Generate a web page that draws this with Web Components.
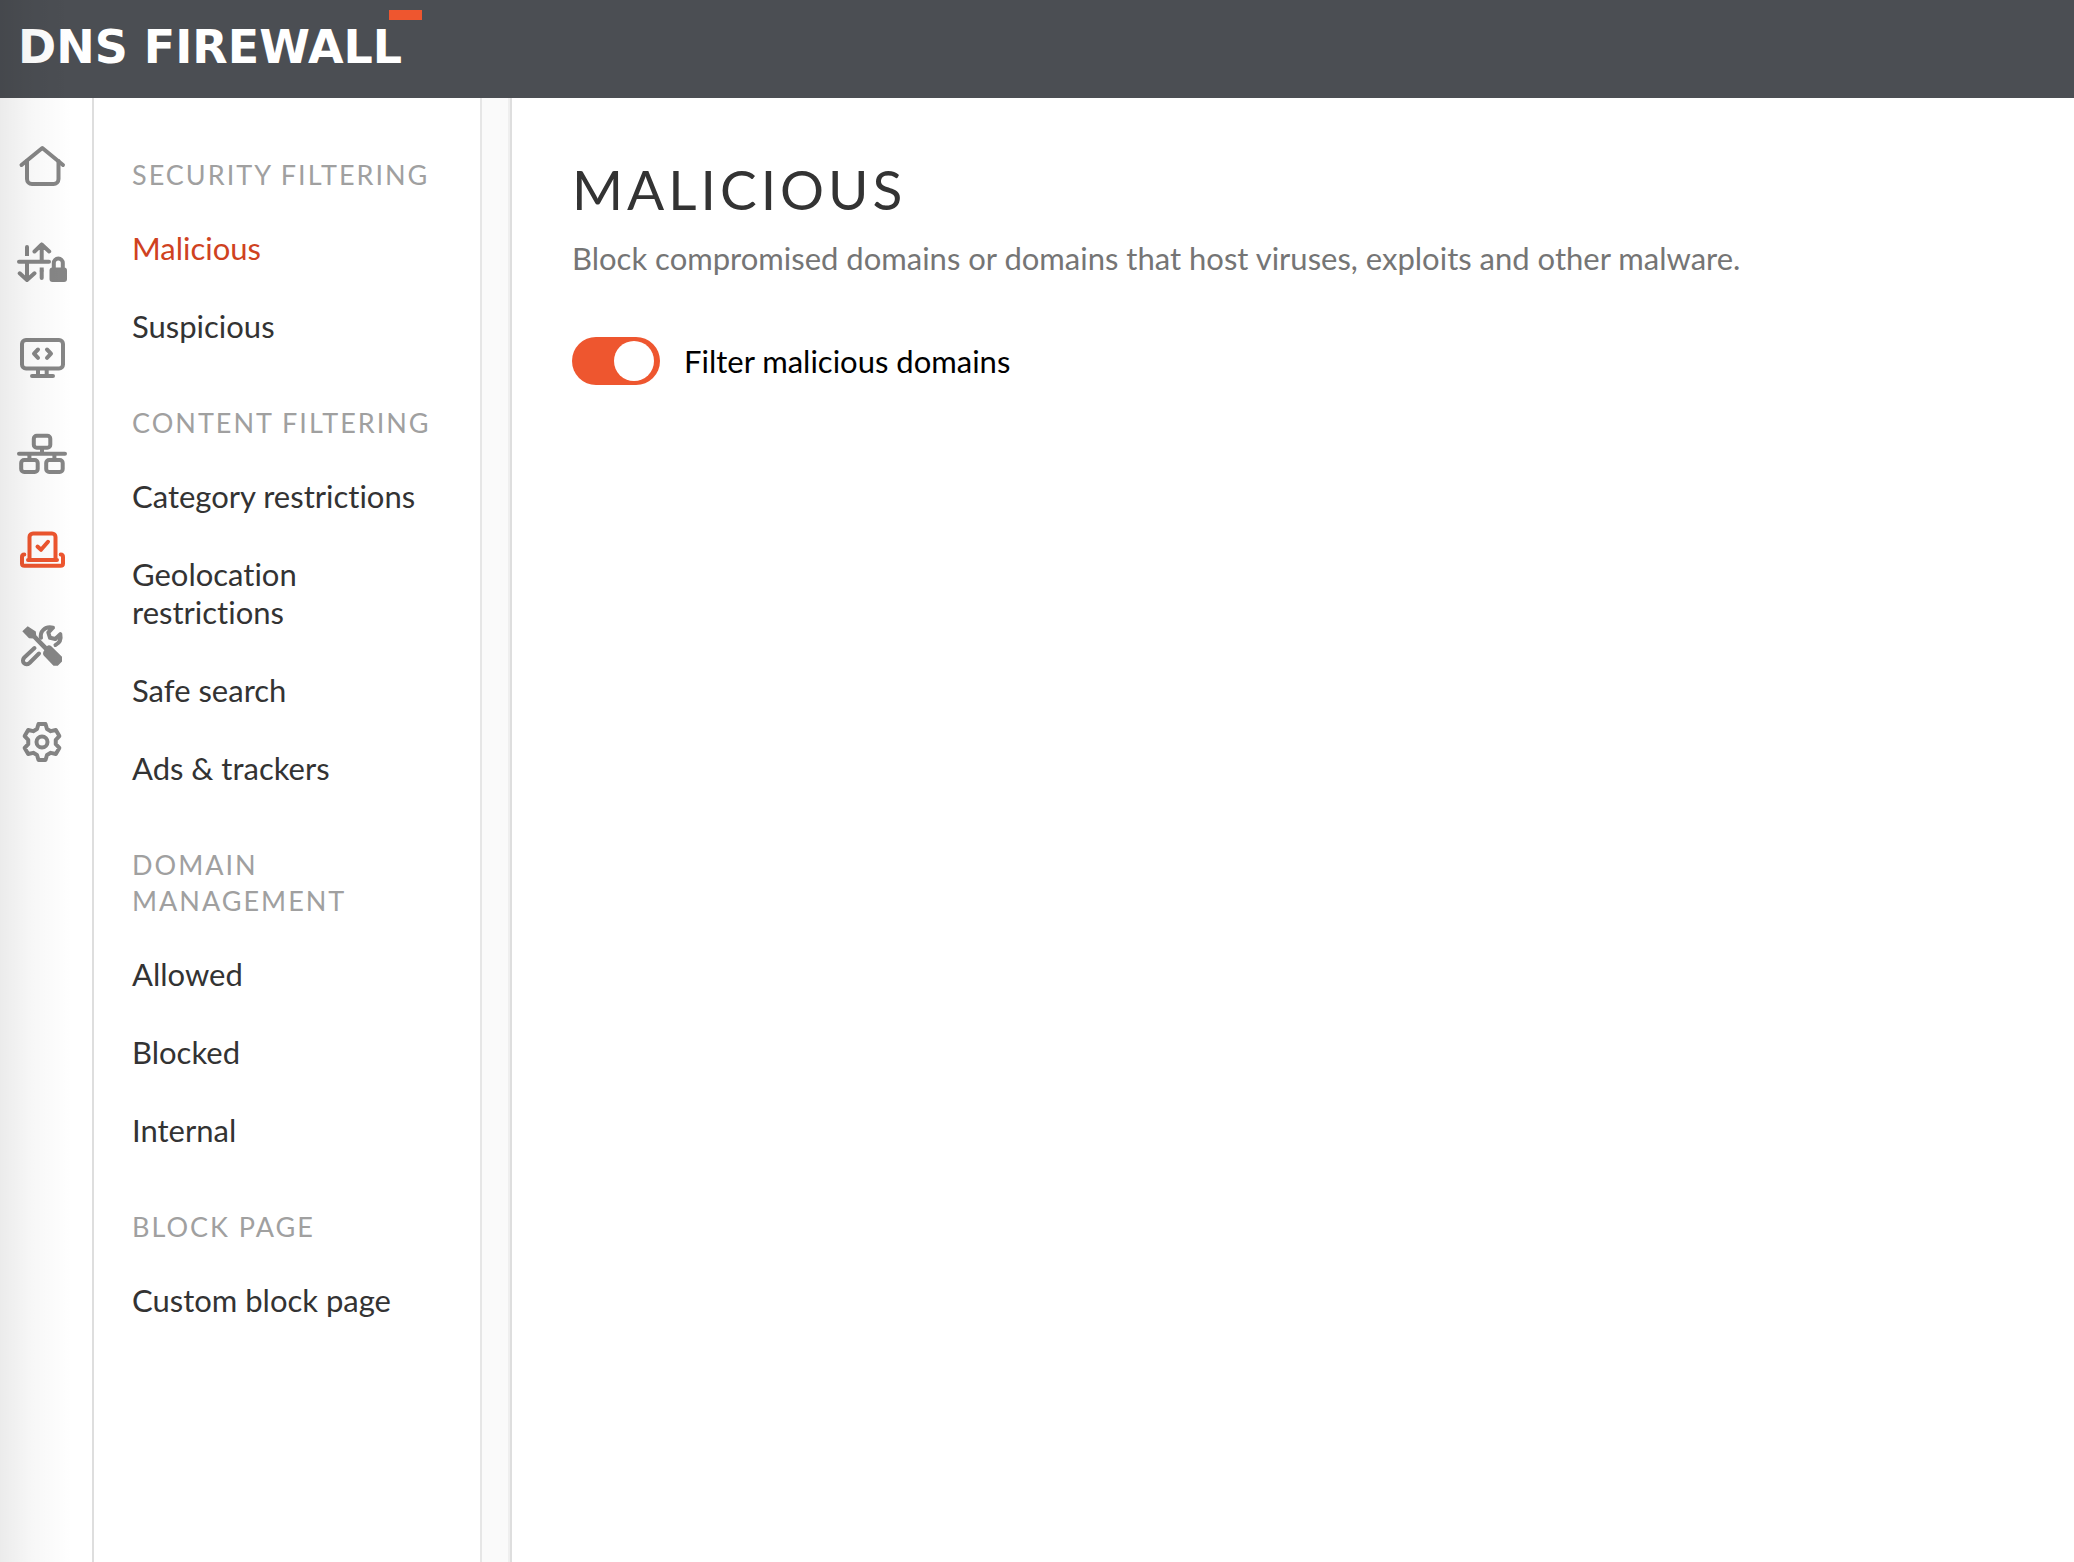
<!DOCTYPE html>
<html lang="en">
<head>
<meta charset="utf-8">
<meta name="viewport" content="width=device-width, initial-scale=1">
<title>DNS Firewall</title>
<style>
    body {
        margin: 0;
        background-color: #fff;
        color: #333;
        font-family: Lato, "Open Sans", sans-serif;
        font-size: 31px;
        font-variant-ligatures: none;
        line-height: 38px;
        --accent: #ee562f;
        --accent-text: #cf421f;
        --bar: #4b4e53;
        --icon: #868686;
        --line: #dedede;
    }
</style>
</head>
<body>
<firewall-app>
    <app-header slot="header">DNS FIREWALL</app-header>
    <icon-rail slot="rail"></icon-rail>
    <side-menu slot="menu">
        <menu-group heading="Security filtering">
            <menu-item active>Malicious</menu-item>
            <menu-item>Suspicious</menu-item>
        </menu-group>
        <menu-group heading="Content filtering">
            <menu-item>Category restrictions</menu-item>
            <menu-item>Geolocation restrictions</menu-item>
            <menu-item>Safe search</menu-item>
            <menu-item>Ads &amp; trackers</menu-item>
        </menu-group>
        <menu-group heading="Domain management">
            <menu-item>Allowed</menu-item>
            <menu-item>Blocked</menu-item>
            <menu-item>Internal</menu-item>
        </menu-group>
        <menu-group heading="Block page">
            <menu-item>Custom block page</menu-item>
        </menu-group>
    </side-menu>
    <filter-page>
        <span slot="title">Malicious</span>
        <span slot="description">Block compromised domains or domains that host viruses, exploits and other malware.</span>
        <toggle-switch checked label="Filter malicious domains"></toggle-switch>
    </filter-page>
</firewall-app>

<script>
class FirewallApp extends HTMLElement {
    constructor() {
        super();
        this.attachShadow({ mode: 'open' });
        this.shadowRoot.innerHTML = `
            <style>
                :host {
                    display: flex;
                    flex-direction: column;
                    min-height: 100vh;
                    position: relative;
                }
                .body {
                    display: flex;
                    flex: 1;
                }
                .gutter {
                    flex: none;
                    width: 28px;
                    background-color: #fafafa;
                    border-right: 2px solid var(--line);
                    box-shadow: inset -2px 0 #efefef;
                }
                main {
                    flex: 1;
                    min-width: 0;
                }
                /* soft shade along the window's left edge */
                .shade {
                    position: absolute;
                    top: 0;
                    bottom: 0;
                    left: 0;
                    width: 72px;
                    background: linear-gradient(to right, rgba(0, 0, 0, .08), rgba(0, 0, 0, .03) 45%, rgba(0, 0, 0, 0));
                    pointer-events: none;
                }
            </style>
            <slot name="header"></slot>
            <div class="body">
                <slot name="rail"></slot>
                <slot name="menu"></slot>
                <div class="gutter"></div>
                <main><slot></slot></main>
            </div>
            <div class="shade"></div>
        `;
    }
}

class AppHeader extends HTMLElement {
    constructor() {
        super();
        this.attachShadow({ mode: 'open' });
        this.shadowRoot.innerHTML = `
            <style>
                :host {
                    display: flex;
                    align-items: center;
                    box-sizing: border-box;
                    height: 98px;
                    padding: 0 18px 4px;
                    background-color: var(--bar);
                }
                a {
                    position: relative;
                    color: #fff;
                    font-family: "DejaVu Sans", Inter, sans-serif;
                    font-size: 46px;
                    font-weight: 700;
                    line-height: 52px;
                    text-decoration: none;
                }
                a::after {
                    content: "";
                    position: absolute;
                    top: -11px;
                    right: -20px;
                    width: 33px;
                    height: 10px;
                    background-color: var(--accent);
                }
            </style>
            <a href="#"><slot></slot></a>
        `;
    }
}

const ICONS = [
    ['Home', `
        <path d="M6.500 26 27.300 9 48 26"/>
        <path d="M12 22v18a5 5 0 0 0 5 5h21.500a5 5 0 0 0 5-5V22"/>`],
    ['Traffic', `
        <path d="M26.700 26V9.500M19.500 16.500l7.200-7 7.500 7M4 26.700h30M12 28v16.500M4.700 38.300 12 45l7.500-6.700M12 12v5M26.700 36v7"/>
        <path d="M12 16v5M26.700 32.500v4" stroke-linecap="butt"/>
        <rect x="34.500" y="32.500" width="17.500" height="14.500" rx="3" fill="currentColor" stroke="none"/>
        <path d="M38.800 33v-5a4.500 4.500 0 0 1 9 0v5"/>`],
    ['Endpoints', `
        <rect x="7" y="9" width="41" height="28.500" rx="4"/>
        <path d="M17 45h21M23 38v6M31.700 38v6M23 18.500l-4 4.200 4 4.200M32 18.500l4 4.200-4 4.200"/>`],
    ['Network', `
        <rect x="18.800" y="8.800" width="16.500" height="12" rx="3"/>
        <rect x="6.200" y="33" width="16.500" height="12" rx="3"/>
        <rect x="31.200" y="33" width="16.500" height="12" rx="3"/>
        <path d="M4 26.700h46M27 21.500v5M14.400 27v5M39.400 27v5"/>`],
    ['Filtering', `
        <path d="M14.500 36V14a3.500 3.500 0 0 1 3.500-3.500h19a3.500 3.500 0 0 1 3.500 3.500v22M13 37h29"/>
        <path d="M9.300 31.500C7.500 31.500 7 33 7 34v6.500C7 42 8 42.800 9.500 42.800h36c1.500 0 2.500-.8 2.500-2.300V34c0-1-.5-2.500-2.300-2.500M22.500 23.500l3.500 3.300 7-8"/>`],
    ['Tools', `
        <path d="M7.300 12.300 12.700 7.300 20.800 12.500 21.200 16.200 32 27.200C33 26 35 26 36.300 27.300L47 37.700V42.500L42.800 46.700H38.500L28.700 36.500C27.500 35 28 32.800 29.300 31.200L18 19.500 14 19.300Z" fill="currentColor" stroke="none"/>
        <path d="M26 18.800C24.800 13 29.500 6.700 38 8.700L33.300 13.500 35 18.800 40.300 20 45.300 15.200C46.300 20 44.500 24 40.500 26M19.500 29 9.300 38.500C5.500 42.500 10.500 47.800 14.500 44L24 34.500"/>`],
    ['Settings', `
        <circle cx="27" cy="27" r="5.500"/>
        <path transform="translate(27 27)" d="M-3.500-18H3.500L5-13 8.760-10.830 13.840-12.030 17.340-5.970 13.760-2.170V2.170L17.340 5.970 13.840 12.030 8.760 10.830 5 13 3.500 18H-3.500L-5 13-8.760 10.830-13.840 12.030-17.340 5.970-13.760 2.170V-2.170L-17.340-5.970-13.840-12.030-8.760-10.830-5-13Z"/>`]
];

class IconRail extends HTMLElement {
    constructor() {
        super();
        this.attachShadow({ mode: 'open' });
        const links = ICONS.map(([name, paths]) => `
            <a href="#" aria-label="${name}"${name === 'Filtering' ? ' class="active"' : ''}>
                <svg viewBox="0 0 54 54" width="54" height="54" aria-hidden="true">${paths}</svg>
            </a>`).join('');
        this.shadowRoot.innerHTML = `
            <style>
                :host {
                    display: block;
                    flex: none;
                    width: 92px;
                    border-right: 2px solid var(--line);
                }
                nav {
                    display: flex;
                    flex-direction: column;
                    padding: 20px 8px 20px 0;
                }
                a {
                    display: flex;
                    align-items: center;
                    justify-content: center;
                    height: 96px;
                    color: var(--icon);
                }
                a.active {
                    color: var(--accent);
                }
                svg {
                    fill: none;
                    stroke: currentColor;
                    stroke-width: 4;
                    stroke-linecap: round;
                    stroke-linejoin: round;
                }
            </style>
            <nav aria-label="Main">${links}</nav>
        `;
    }
}

class SideMenu extends HTMLElement {
    constructor() {
        super();
        this.attachShadow({ mode: 'open' });
        this.shadowRoot.innerHTML = `
            <style>
                :host {
                    display: block;
                    flex: none;
                    box-sizing: border-box;
                    width: 388px;
                    padding: 59px 38px;
                    border-right: 2px solid #e6e6e6;
                }
                nav {
                    display: flex;
                    flex-direction: column;
                    gap: 40px;
                }
            </style>
            <nav aria-label="Filtering"><slot></slot></nav>
        `;
    }
}

class MenuGroup extends HTMLElement {
    constructor() {
        super();
        this.attachShadow({ mode: 'open' });
        this.shadowRoot.innerHTML = `
            <style>
                :host {
                    display: block;
                }
                h2 {
                    margin: 0 0 16px;
                    color: #a0a0a0;
                    font-size: 27px;
                    font-weight: 400;
                    line-height: 36px;
                    letter-spacing: 2px;
                    text-transform: uppercase;
                }
            </style>
            <h2></h2>
            <slot></slot>
        `;
    }

    connectedCallback() {
        this.shadowRoot.querySelector('h2').textContent = this.getAttribute('heading');
    }
}

class MenuItem extends HTMLElement {
    constructor() {
        super();
        this.attachShadow({ mode: 'open' });
        this.shadowRoot.innerHTML = `
            <style>
                :host {
                    display: block;
                }
                a {
                    display: block;
                    padding: 20px 0;
                    color: inherit;
                    text-decoration: none;
                }
                :host([active]) a {
                    color: var(--accent-text);
                }
            </style>
            <a href="#"><slot></slot></a>
        `;
    }
}

class FilterPage extends HTMLElement {
    constructor() {
        super();
        this.attachShadow({ mode: 'open' });
        this.shadowRoot.innerHTML = `
            <style>
                :host {
                    display: block;
                    padding: 59px 60px;
                }
                h1 {
                    margin: 0;
                    font-size: 55px;
                    font-weight: 400;
                    line-height: 64px;
                    letter-spacing: 4px;
                    text-transform: uppercase;
                }
                p {
                    margin: 18px 0 60px;
                    color: #757575;
                }
            </style>
            <h1><slot name="title"></slot></h1>
            <p><slot name="description"></slot></p>
            <slot></slot>
        `;
    }
}

class ToggleSwitch extends HTMLElement {
    constructor() {
        super();
        this.attachShadow({ mode: 'open' });
        this.shadowRoot.innerHTML = `
            <style>
                :host {
                    display: flex;
                    align-items: center;
                    gap: 24px;
                    color: #000;
                }
                input {
                    appearance: none;
                    display: flex;
                    flex: none;
                    box-sizing: border-box;
                    width: 88px;
                    height: 48px;
                    margin: 0;
                    padding: 4px 6px;
                    border-radius: 24px;
                    background-color: #a0a0a0;
                    cursor: pointer;
                }
                input::before {
                    content: "";
                    width: 40px;
                    height: 40px;
                    border-radius: 50%;
                    background-color: #fff;
                }
                input:checked {
                    justify-content: flex-end;
                    background-color: var(--accent);
                }
            </style>
            <input type="checkbox" role="switch" id="toggle">
            <label for="toggle"></label>
        `;
    }

    connectedCallback() {
        this.shadowRoot.querySelector('input').checked = this.hasAttribute('checked');
        this.shadowRoot.querySelector('label').textContent = this.getAttribute('label');
    }
}

customElements.define('firewall-app', FirewallApp);
customElements.define('app-header', AppHeader);
customElements.define('icon-rail', IconRail);
customElements.define('side-menu', SideMenu);
customElements.define('menu-group', MenuGroup);
customElements.define('menu-item', MenuItem);
customElements.define('filter-page', FilterPage);
customElements.define('toggle-switch', ToggleSwitch);
</script>
</body>
</html>
